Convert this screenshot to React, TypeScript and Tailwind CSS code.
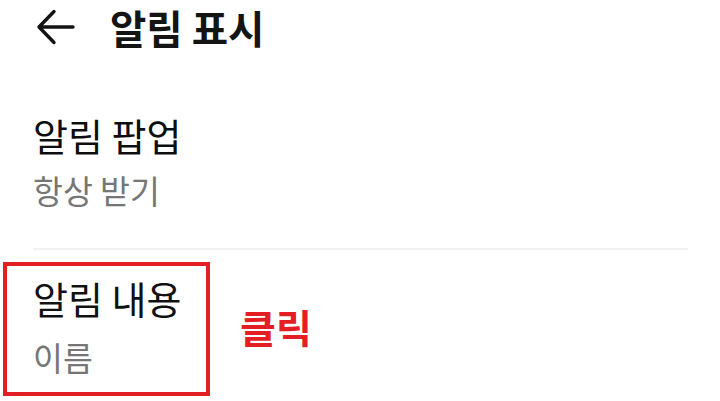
export default function App() {
  const font = { fontFamily: '"Noto Sans CJK KR", "Noto Sans", sans-serif' };
  return (
    <div className="w-[720px] h-[401px] bg-white" style={font}>
      <header className="flex items-center pl-[36px] pt-[1px] pb-[1px]">
        <svg width="40" height="36" viewBox="0 0 40 36" fill="none" stroke="#141414" strokeWidth="3.4" strokeLinecap="round" strokeLinejoin="round">
          <path d="M37 18H3M18 2.5L3 18l15 15.5" />
        </svg>
        <h1 className="ml-[34px] pr-[4px] text-[39.5px] font-bold text-[#141414] leading-[52px] whitespace-nowrap">알림 표시</h1>
      </header>
      <div className="pl-[33px] pt-[62px]">
        <div className="text-[38px] leading-none text-[#0d0d0d]">알림 팝업</div>
        <div className="text-[32.5px] leading-none text-[#767676] mt-[20px]">항상 받기</div>
      </div>
      <div className="ml-[33px] w-[655px] h-[2px] bg-[#f2f2f2] mt-[41px]" />
      <div className="flex items-center mt-[12px]">
        <div className="ml-[3px] w-[207px] h-[134px] border-[4px] border-[#e31e24] pl-[26px] pt-[13px]">
          <div className="text-[38px] leading-none text-[#111]">알림 내용</div>
          <div className="text-[32.5px] leading-none text-[#767676] mt-[24px]">이름</div>
        </div>
        <div className="ml-[30px] mb-[4px] text-[39px] font-bold text-[#e31e24] leading-[1.3]">클릭</div>
      </div>
    </div>
  );
}
